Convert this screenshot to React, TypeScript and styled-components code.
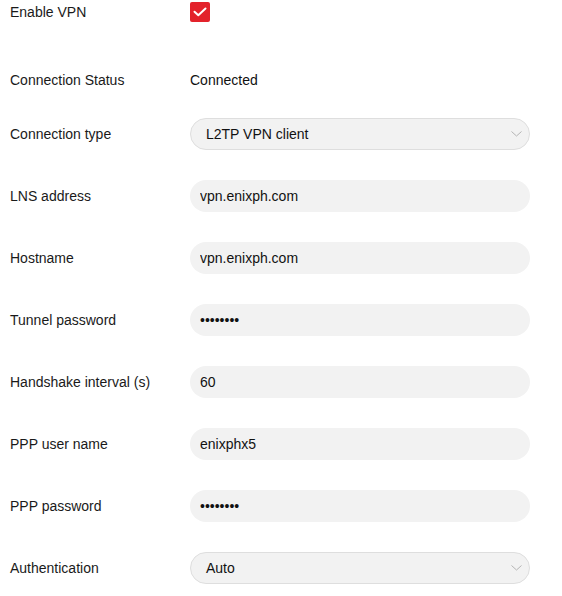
import { createGlobalStyle } from 'styled-components'
import styled from 'styled-components'

const GlobalStyle = createGlobalStyle`
  html, body {
    margin: 0;
    padding: 0;
    background: #ffffff;
  }
  body {
    font-family: 'Liberation Sans', Arial, sans-serif;
    font-size: 14px;
    color: #1a1a1a;
  }
`

type Field =
  | { kind: 'text'; label: string; value: string }
  | { kind: 'password'; label: string; value: string }
  | { kind: 'select'; label: string; value: string }

const fields: Field[] = [
  { kind: 'select', label: 'Connection type', value: 'L2TP VPN client' },
  { kind: 'text', label: 'LNS address', value: 'vpn.enixph.com' },
  { kind: 'text', label: 'Hostname', value: 'vpn.enixph.com' },
  { kind: 'password', label: 'Tunnel password', value: 'secret12' },
  { kind: 'text', label: 'Handshake interval (s)', value: '60' },
  { kind: 'text', label: 'PPP user name', value: 'enixphx5' },
  { kind: 'password', label: 'PPP password', value: 'secret12' },
  { kind: 'select', label: 'Authentication', value: 'Auto' },
]

const App = () => {
  return (
    <>
      <GlobalStyle />
      <Form>
        <Row $height={24} $top={0}>
          <Label>Enable VPN</Label>
          <Checkbox role="checkbox" aria-checked="true">
            <svg width="14" height="10" viewBox="0 0 14 10" fill="none">
              <path d="M1.5 4.8 L5.3 8.3 L12.5 1.5" stroke="#fff" strokeWidth="2" strokeLinecap="round" strokeLinejoin="round" />
            </svg>
          </Checkbox>
        </Row>

        <Row $height={16} $top={48}>
          <Label>Connection Status</Label>
          <Value>Connected</Value>
        </Row>

        {fields.map((f) => (
          <Row key={f.label} $height={32} $top={30}>
            <Label>{f.label}</Label>
            {f.kind === 'select' ? (
              <Select>
                <span>{f.value}</span>
                <svg width="11" height="6" viewBox="0 0 11 6" fill="none">
                  <path d="M0.5 0.5 L5.5 5 L10.5 0.5" stroke="#b4b4b4" strokeWidth="1" />
                </svg>
              </Select>
            ) : (
              <Input type={f.kind} defaultValue={f.value} readOnly />
            )}
          </Row>
        ))}
      </Form>
    </>
  )
}

const Form = styled.div`
  display: flex;
  flex-direction: column;
  padding: 0 10px;
  width: 520px;
`

const Row = styled.div<{ $height: number; $top: number }>`
  display: grid;
  grid-template-columns: 180px 340px;
  align-items: center;
  height: ${(p) => p.$height}px;
  margin-top: ${(p) => p.$top}px;
`

const Label = styled.div`
  line-height: 16px;
  color: #1a1a1a;
`

const Value = styled.div`
  line-height: 16px;
  color: #111;
`

const Checkbox = styled.div`
  width: 20px;
  height: 20px;
  border-radius: 2px;
  background: #e3222b;
  display: flex;
  align-items: center;
  justify-content: center;
`

const Input = styled.input`
  box-sizing: border-box;
  width: 340px;
  height: 32px;
  border: none;
  outline: none;
  border-radius: 16px;
  background: #f2f2f2;
  padding: 0 10px;
  font-family: 'Liberation Sans', Arial, sans-serif;
  font-size: 14px;
  color: #111;
`

const Select = styled.div`
  box-sizing: border-box;
  width: 340px;
  height: 32px;
  border: 1px solid #dedede;
  border-radius: 16px;
  background: #f2f2f2;
  padding: 0 7px 0 15px;
  display: flex;
  align-items: center;
  justify-content: space-between;
  color: #111;
`

export default App
